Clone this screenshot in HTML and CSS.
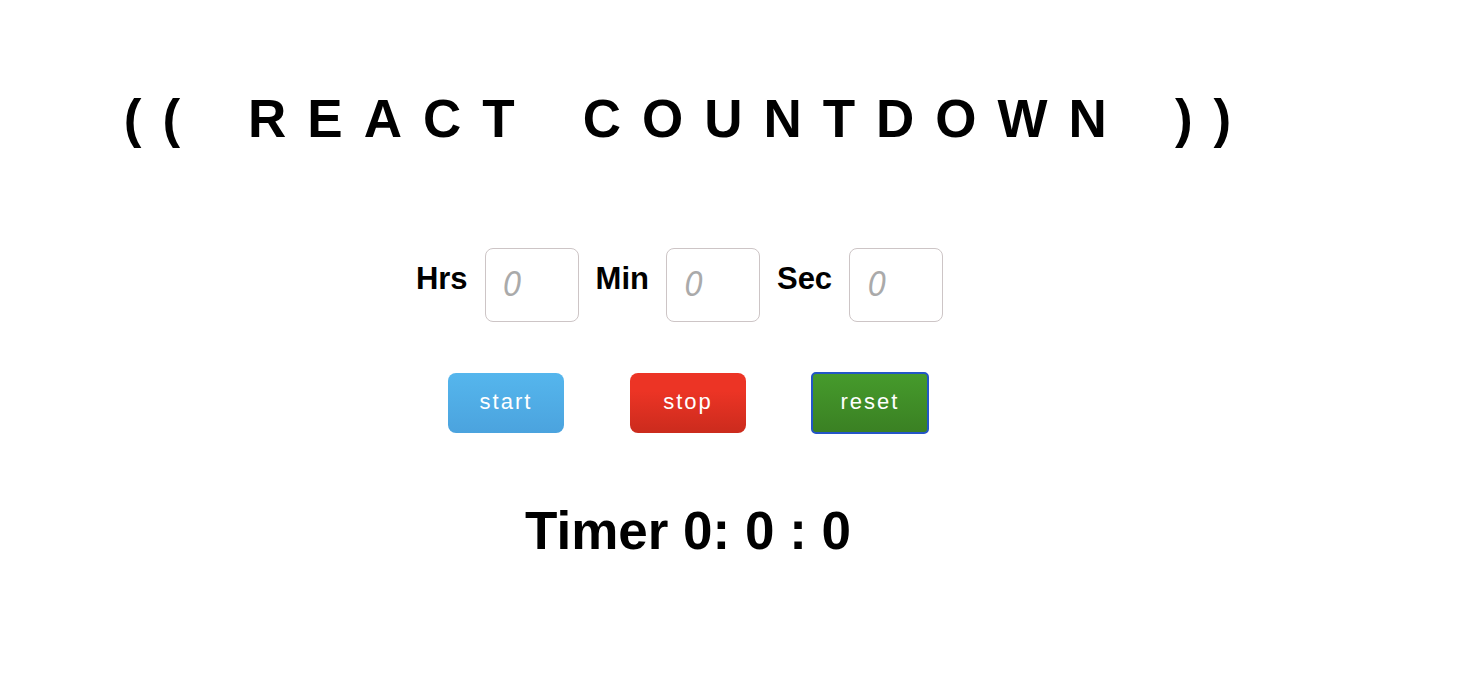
FILE: index.html
```html
<!DOCTYPE html>
<html lang="en">
<head>
<meta charset="utf-8">
<meta name="viewport" content="width=device-width, initial-scale=1">
<title>React Countdown</title>
<link rel="stylesheet" href="styles.css">
</head>
<body>
<main class="countdown">
  <h1 class="title">
    <span>((</span>
    <span>REACT</span>
    <span>COUNTDOWN</span>
    <span>))</span>
  </h1>
  <form class="fields">
    <label class="label" for="hrs">Hrs</label>
    <input class="field" id="hrs" type="text" inputmode="numeric" placeholder="0">
    <label class="label" for="min">Min</label>
    <input class="field" id="min" type="text" inputmode="numeric" placeholder="0">
    <label class="label" for="sec">Sec</label>
    <input class="field" id="sec" type="text" inputmode="numeric" placeholder="0">
  </form>
  <div class="actions">
    <button class="button start" type="button">start</button>
    <button class="button stop" type="button">stop</button>
    <button class="button reset" type="button">reset</button>
  </div>
  <h2 class="timer">Timer 0: 0 : 0</h2>
</main>
</body>
</html>
```
FILE: styles.css
```css
* {
  box-sizing: border-box;
}

body {
  margin: 0;
  background: #fff;
  color: #000;
  font-family: "Liberation Sans", Arial, sans-serif;
}

.countdown {
  display: flex;
  flex-direction: column;
  align-items: center;
  padding: 88px 82px 32px 0;
}

.title {
  display: flex;
  gap: 47px;
  margin: 0;
  font-size: 53px;
  line-height: 62px;
  letter-spacing: 21px;
  white-space: nowrap;
}

.fields {
  display: flex;
  align-items: flex-start;
  gap: 17px;
  margin-top: 98px;
  padding-right: 17px;
}

.label {
  padding-top: 12px;
  font-size: 31px;
  line-height: 38px;
  font-weight: bold;
}

.field {
  width: 94px;
  height: 74px;
  padding: 0 17px 4px;
  border: 1px solid #cdc5c6;
  border-radius: 8px;
  background: #fff;
  font-family: "Open Sans", sans-serif;
  font-size: 34px;
}

.field::placeholder {
  color: #aaa;
  font-style: italic;
}

.actions {
  display: flex;
  gap: 66px;
  margin-top: 51px;
}

.button {
  min-width: 116px;
  height: 60px;
  padding: 0 24px 3px;
  border: 0;
  border-radius: 8px;
  color: #fff;
  font-family: "Liberation Sans", Arial, sans-serif;
  font-size: 22px;
  letter-spacing: 2px;
}

.start {
  background: linear-gradient(#55b6ed, #4ba3de);
}

.stop {
  background: linear-gradient(#ec3425 30%, #cb2b1d);
}

.reset {
  border-radius: 4px;
  background: linear-gradient(#469b2c, #3a8023);
  outline: 2px solid #2456c6;
  outline-offset: -1px;
}

.timer {
  margin: 67px 0 0;
  font-size: 53px;
  line-height: 62px;
}
```
